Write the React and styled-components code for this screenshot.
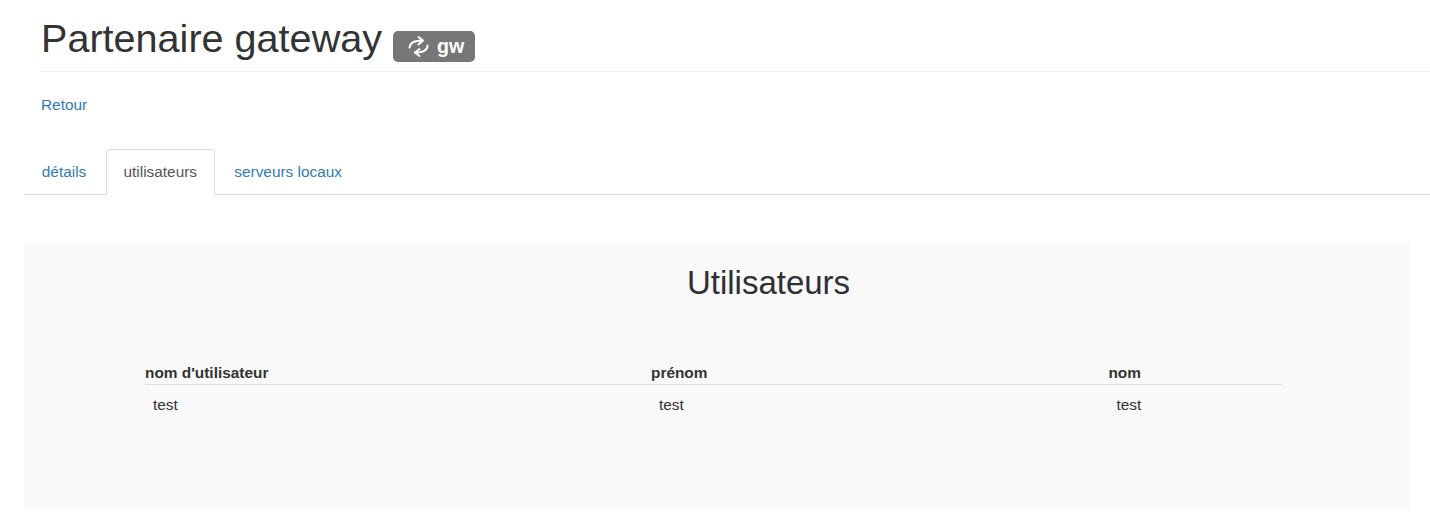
import styled, { createGlobalStyle } from "styled-components";

const GlobalStyle = createGlobalStyle`
  html, body {
    margin: 0;
    padding: 0;
    background: #fff;
    font-family: "Liberation Sans", Arial, sans-serif;
    font-size: 15.4px;
    color: #333;
  }
  a {
    color: #337ab7;
    text-decoration: none;
  }
`;

const Page = styled.div`
  padding: 0 0 14px 24px;
`;

const Header = styled.div`
  margin-left: 17px;
  padding: 14px 0 9px;
  border-bottom: 1px solid #eee;
  display: flex;
  align-items: center;
`;

const Title = styled.h1`
  margin: 0;
  font-size: 39.6px;
  font-weight: 400;
  line-height: 48px;
`;

const Badge = styled.span`
  display: flex;
  align-items: center;
  gap: 7px;
  height: 31px;
  margin: 16px 0 0 11px;
  padding: 0 11px 0 14px;
  border-radius: 5px;
  background: #777;
  color: #fff;
  font-size: 19.6px;
  font-weight: 700;
`;

const BackLink = styled.a`
  display: block;
  margin: 24px 0 35px 17px;
  line-height: 18px;
`;

const Tabs = styled.ul`
  display: flex;
  margin: 0;
  padding: 0;
  list-style: none;
  border-bottom: 1px solid #ddd;
  height: 45px;
`;

const Tab = styled.li`
  box-sizing: border-box;
  height: 46px;
  padding: 13px 16.8px 0;
  margin-right: 1.6px;
  line-height: 18px;
  border: 1px solid ${(p) => (p.$active ? "#ddd" : "transparent")};
  border-bottom-color: ${(p) => (p.$active ? "#fff" : "transparent")};
  border-radius: 4px 4px 0 0;
  background: ${(p) => (p.$active ? "#fff" : "transparent")};
  color: ${(p) => (p.$active ? "#555" : "#337ab7")};
`;

const Panel = styled.div`
  box-sizing: border-box;
  width: 1386px;
  height: 266px;
  margin-top: 48px;
  padding: 18px 121px 0;
  background: #f9f9f9;
`;

const PanelTitle = styled.h2`
  margin: 0 0 58px;
  padding-left: 103px;
  text-align: center;
  font-size: 33px;
  font-weight: 400;
  line-height: 44px;
  color: #2f2f38;
`;

const UserTable = styled.table`
  width: 1137px;
  border-collapse: collapse;
  table-layout: fixed;
`;

const Th = styled.th`
  width: ${(p) => p.$width}px;
  padding: 0 0 2px;
  text-align: left;
  font-size: 15.4px;
  font-weight: 700;
  line-height: 19px;
  border-bottom: 1px solid #ddd;
`;

const Td = styled.td`
  padding: 11px 8px 0;
  line-height: 18px;
  color: #333;
`;

const RetweetIcon = () => (
  <svg width="23" height="23" viewBox="0 0 23 23" fill="none" stroke="#fff" strokeWidth="2" strokeLinecap="round" strokeLinejoin="round">
    <path d="M2.5 12.5 C3 8 7 5.5 15.5 5.5" />
    <path d="M11.5 2 L16 5.5 L11.5 9.5" />
    <path d="M20.5 10.5 C20.5 15 16.5 17.5 8 17.5" />
    <path d="M12.5 14 L8 17.5 L12.5 21" />
  </svg>
);

const App = () => {
  return (
    <Page>
      <GlobalStyle />
      <Header>
        <Title>Partenaire gateway</Title>
        <Badge>
          <RetweetIcon />
          gw
        </Badge>
      </Header>
      <BackLink href="#">Retour</BackLink>
      <Tabs>
        <Tab>
          <a href="#">détails</a>
        </Tab>
        <Tab $active>utilisateurs</Tab>
        <Tab>
          <a href="#">serveurs locaux</a>
        </Tab>
      </Tabs>
      <Panel>
        <PanelTitle>Utilisateurs</PanelTitle>
        <UserTable>
          <thead>
            <tr>
              <Th $width={506}>nom d'utilisateur</Th>
              <Th $width={457.4}>prénom</Th>
              <Th $width={173.6}>nom</Th>
            </tr>
          </thead>
          <tbody>
            <tr>
              <Td>test</Td>
              <Td>test</Td>
              <Td>test</Td>
            </tr>
          </tbody>
        </UserTable>
      </Panel>
    </Page>
  );
};

export default App;
